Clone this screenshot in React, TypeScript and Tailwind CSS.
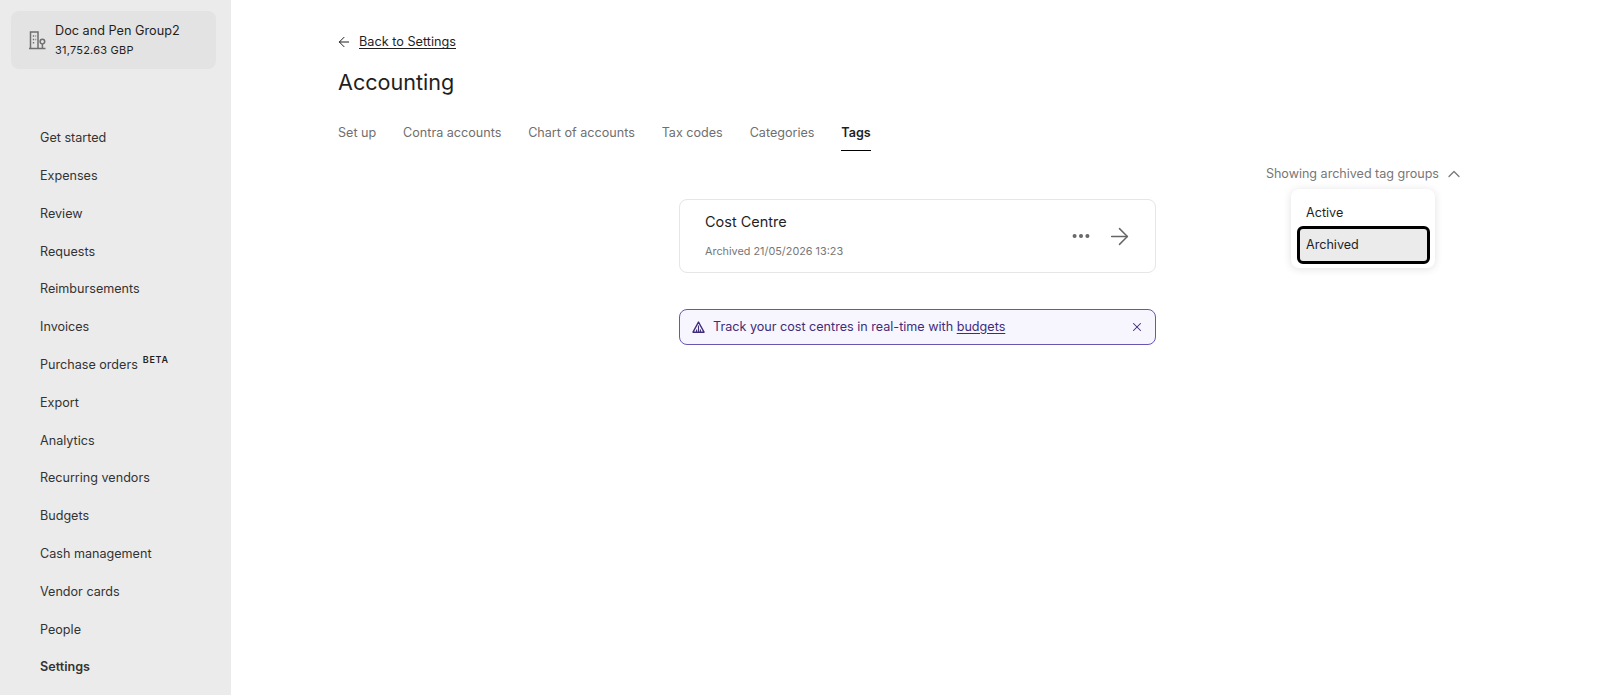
import { ArrowLeft, ArrowRight, ChevronUp, MoreHorizontal, X } from "lucide-react";

const navItems = [
  "Get started",
  "Expenses",
  "Review",
  "Requests",
  "Reimbursements",
  "Invoices",
  "Purchase orders",
  "Export",
  "Analytics",
  "Recurring vendors",
  "Budgets",
  "Cash management",
  "Vendor cards",
  "People",
  "Settings",
];

const tabs = ["Set up", "Contra accounts", "Chart of accounts", "Tax codes", "Categories", "Tags"];

const BuildingPin = () => (
  <svg width="17" height="19" viewBox="0 0 17 19" fill="none" stroke="#6f6f6f" strokeWidth="1.5" className="shrink-0">
    <path d="M1.5 18V1h7.5v17M0 17.6h16.5" />
    <path d="M3.8 5h1.4M3.8 8.4h1.4M3.8 11.8h1.4M6.4 5h.8M6.4 8.4h.8" />
    <circle cx="13.4" cy="10.6" r="2.3" />
    <path d="M13.4 13v4.4" />
  </svg>
);

const BannerIcon = () => (
  <svg width="13" height="12" viewBox="0 0 13 12" fill="none" stroke="#3f2d7a" strokeWidth="1.4" className="shrink-0">
    <path d="M6.5 1 1 11.2h11z" strokeLinejoin="round" />
    <path d="M6.5 4.4v6.6M4.6 11V8.6M8.4 11V8.6" strokeWidth="1.1" />
  </svg>
);

export default function App() {
  return (
    <div className="flex h-screen overflow-hidden bg-white text-[#1f1f1f] [font-family:Inter,sans-serif]">
      <aside className="w-[231px] shrink-0 bg-[#ebebeb] px-[11px] pt-[11px]">
        <div className="flex h-[58px] w-[205px] items-center gap-[9px] rounded-lg bg-[#e3e3e3] pl-[18px]">
          <BuildingPin />
          <div>
            <div className="text-[12.7px] leading-[20px]">Doc and Pen Group2</div>
            <div className="pt-[0.5px] text-[11px] leading-[18px] tracking-[0.02em]">31,752.63 GBP</div>
          </div>
        </div>
        <nav className="mt-[50.8px] flex flex-col pl-[29px]">
          {navItems.map((item) => (
            <div
              key={item}
              className={`flex h-[37.8px] items-center text-[12.6px] text-[#333333] ${item === "Settings" ? "font-semibold" : ""}`}
            >
              {item}
              {item === "Purchase orders" && (
                <span className="mb-[12px] ml-[5px] text-[9px] font-semibold tracking-[0.08em] text-[#1f1f1f]">BETA</span>
              )}
            </div>
          ))}
        </nav>
      </aside>

      <main className="flex-1 pl-[107px] pt-[32px]">
        <a className="-ml-[2px] flex h-5 items-center gap-[7px] text-[12.7px]">
          <ArrowLeft size={16} strokeWidth={1.5} />
          <span className="underline underline-offset-2">Back to Settings</span>
        </a>
        <h1 className="mt-[13.5px] text-[21.6px] font-normal leading-[32px]">Accounting</h1>
        <div className="mt-[21px] flex gap-[26.85px]">
          {tabs.map((tab) => (
            <div
              key={tab}
              className={`h-[32.5px] pt-[5px] text-[12.6px] ${tab === "Tags" ? "border-b border-black font-semibold" : "text-[#6f6f6f]"}`}
            >
              {tab}
            </div>
          ))}
        </div>

        <div className="relative w-[1126px]">
          <div className="mt-[12.5px] flex items-center justify-end gap-[5px] text-[12.55px] leading-5 text-[#777777]">
            <span>Showing archived tag groups</span>
            <ChevronUp size={20} strokeWidth={1.5} />
          </div>

          <div className="absolute left-[953px] top-[25px] w-[144px] rounded-lg bg-white pb-[4.5px] pl-[6px] pr-[5px] pt-[5px] shadow-[0_1px_8px_rgba(0,0,0,0.12)]">
            <div className="flex h-[32px] items-center px-[9px] pt-[7px] text-[12.6px]">Active</div>
            <div className="flex h-[38px] items-center rounded-md border-[3px] border-black bg-[#ebebeb] px-[6px] pt-[1px] text-[12.6px]">
              Archived
            </div>
          </div>

          <div className="ml-[341px] mt-[15.5px] w-[477px]">
            <div className="flex h-[74px] items-center justify-between rounded-lg border border-[#e6e6e6] pl-[25px] pr-[22px]">
              <div className="pb-[1.5px]">
                <div className="text-[14.5px] leading-[20px]">Cost Centre</div>
                <div className="mt-[11.5px] text-[10.85px] leading-[16px] text-[#777777]">Archived 21/05/2026 13:23</div>
              </div>
              <div className="flex items-center gap-[14px] text-[#666666]">
                <MoreHorizontal size={22} strokeWidth={2.4} />
                <ArrowRight size={27} strokeWidth={1.3} />
              </div>
            </div>
            <div className="mt-[36px] flex h-[36px] items-center rounded-lg border border-[#6a55b5] bg-[#f7f5fd] pl-[12px] pr-[11px] text-[12.6px] text-[#3f2d7a]">
              <BannerIcon />
              <span className="ml-[8px]">
                Track your cost centres in real-time with <span className="underline underline-offset-2">budgets</span>
              </span>
              <X size={14} strokeWidth={1.8} className="ml-auto" />
            </div>
          </div>
        </div>
      </main>
    </div>
  );
}
